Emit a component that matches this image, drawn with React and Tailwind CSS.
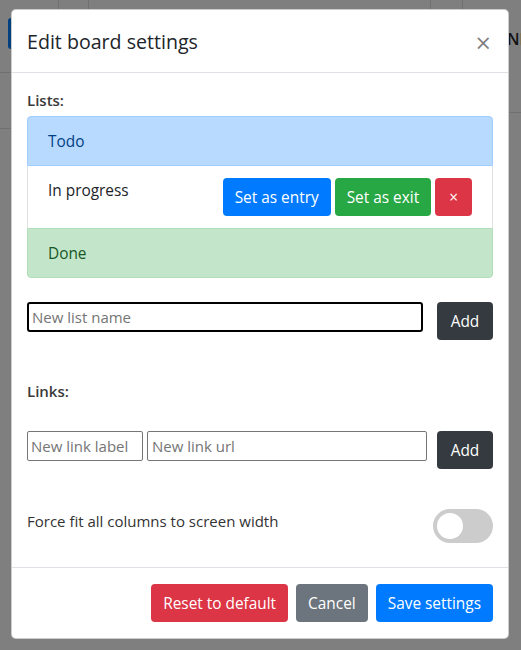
import React from "react";

const font = { fontFamily: '"Open Sans", "Noto Sans", Arial, sans-serif' };

function Btn({ className, children }) {
  return (
    <button
      className={
        "h-[38px] px-3 pt-[2px] rounded-[4px] text-[15.4px] leading-[24px] text-white whitespace-nowrap " +
        className
      }
    >
      {children}
    </button>
  );
}

export default function App() {
  return (
    <div
      className="relative w-[521px] h-[650px] overflow-hidden bg-[#7f7f7f] pt-[9px] pl-[11px] text-[#212529]"
      style={font}
    >
      {/* dimmed page behind the overlay */}
      <div className="absolute inset-0 pointer-events-none">
        <div className="absolute left-[58px] top-0 h-[12px] w-px bg-[#707070]" />
        <div className="absolute left-[88px] top-0 h-[12px] w-px bg-[#707070]" />
        <div className="absolute left-[430px] top-0 h-[12px] w-px bg-[#707070]" />
        <div className="absolute left-[462px] top-0 h-[12px] w-px bg-[#707070]" />
        <div className="absolute left-0 top-[72px] h-px w-[12px] bg-[#707070]" />
        <div className="absolute left-0 top-[128px] h-px w-[12px] bg-[#707070]" />
        <div className="absolute right-0 top-[112px] h-px w-[14px] bg-[#707070]" />
        <div className="absolute left-[8px] top-[18px] h-[31px] w-[6px] rounded-l-[3px] bg-[#00407f]" />
        <div className="absolute left-[507px] top-[27px] w-[14px] overflow-hidden text-[16px] font-semibold text-[#111]">NE</div>
      </div>

      <div className="relative w-[498px] bg-white rounded-[5px] border border-black/20">
        {/* header */}
        <div className="flex items-center justify-between px-[15px] pt-[17px] pb-[15px] border-b border-[#dee2e6]">
          <h5 className="text-[19.6px] leading-[30px] font-medium">Edit board settings</h5>
          <span className="text-[27px] leading-none font-normal text-black/50 mr-[2px]">×</span>
        </div>

        {/* body */}
        <div className="px-[15px] pt-4 pb-6">
          <div className="text-[15px] leading-[22px] font-semibold text-[#3a3a3a] mb-[5px]">Lists:</div>
          <div className="flex flex-col rounded-[4px] text-[15.4px] leading-[24px]">
            <div className="px-5 pt-[13px] pb-[11px] bg-[#b8daff] text-[#004085] border border-[#9fcdff] rounded-t-[4px]">
              Todo
            </div>
            <div className="flex items-start justify-between px-5 py-3 bg-white border-x border-black/[0.125]">
              <span className="pt-[1px]">In progress</span>
              <div className="flex gap-1">
                <Btn className="bg-[#007bff]">Set as entry</Btn>
                <Btn className="bg-[#28a745]">Set as exit</Btn>
                <Btn className="bg-[#dc3545] px-[14px]">×</Btn>
              </div>
            </div>
            <div className="px-5 pt-[13px] pb-[11px] bg-[#c3e6cb] text-[#155724] border border-[#b1dfbb] rounded-b-[4px]">
              Done
            </div>
          </div>

          <div className="flex items-start mt-[24px]">
            <input
              placeholder="New list name"
              className="flex-1 h-[30px] border-2 border-black rounded-[3px] px-[3px] text-[15px] placeholder:text-[#757575] outline-none"
              style={font}
            />
            <Btn className="ml-[14px] w-[56px] bg-[#343a40]">Add</Btn>
          </div>

          <div className="mt-[40px] text-[15px] leading-[22px] font-semibold text-[#3a3a3a]">Links:</div>

          <div className="flex items-start mt-[29px]">
            <input
              placeholder="New link label"
              className="w-[116px] h-[30px] border border-[#767676] rounded-[2px] px-[3px] text-[15px] placeholder:text-[#757575] outline-none"
              style={font}
            />
            <input
              placeholder="New link url"
              className="ml-[4px] flex-1 h-[30px] border border-[#767676] rounded-[2px] px-[4px] text-[15px] placeholder:text-[#757575] outline-none"
              style={font}
            />
            <Btn className="ml-[10px] w-[56px] bg-[#343a40]">Add</Btn>
          </div>

          <div className="flex items-start justify-between mt-[40px]">
            <span className="text-[15px] leading-[24px] text-[#333]">Force fit all columns to screen width</span>
            <div className="w-[60px] h-[34px] rounded-full bg-[#ccc] flex items-center px-[4px]">
              <div className="w-[26px] h-[26px] rounded-full bg-white" />
            </div>
          </div>
        </div>

        {/* footer */}
        <div className="flex justify-end gap-2 px-[15px] py-4 border-t border-[#dee2e6]">
          <Btn className="bg-[#dc3545]">Reset to default</Btn>
          <Btn className="bg-[#6c757d]">Cancel</Btn>
          <Btn className="bg-[#007bff]">Save settings</Btn>
        </div>
      </div>
    </div>
  );
}
